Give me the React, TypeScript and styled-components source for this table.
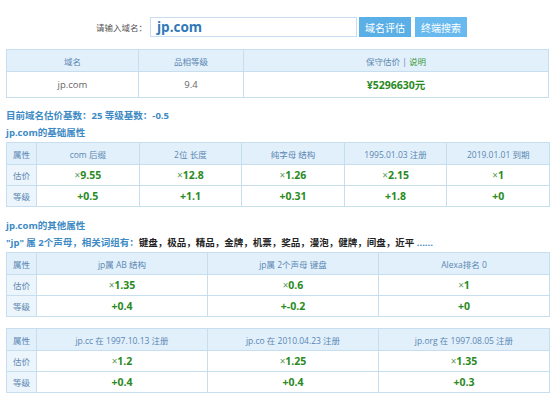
import * as React from "react";
import styled, { createGlobalStyle } from "styled-components";

const GlobalStyle = createGlobalStyle`
  body {
    margin: 0;
    background: #fff;
    font-family: "Open Sans", "Noto Sans CJK SC", sans-serif;
  }
`;

const Page = styled.div`
  width: 544px;
  padding: 17px 0 0 6px;
`;

const SearchRow = styled.div`
  display: flex;
  align-items: center;
  height: 20px;
  padding-left: 90px;
`;

const SearchLabel = styled.span`
  width: 54px;
  font-size: 8.5px;
  color: #555;
`;

const SearchInput = styled.div`
  box-sizing: border-box;
  width: 207px;
  height: 20px;
  border: 1px solid #c8def0;
  padding-left: 6px;
  font-size: 13.5px;
  font-weight: 700;
  line-height: 18px;
  color: #2f78b8;
`;

const Button = styled.button<{ $light?: boolean }>`
  box-sizing: border-box;
  height: 20px;
  width: 52px;
  margin-left: ${(p) => (p.$light ? "4px" : "2px")};
  border: none;
  padding: 0;
  background: ${(p) => (p.$light ? "#68b9ee" : "#5aafe6")};
  color: #fff;
  font-family: "Noto Sans CJK SC", sans-serif;
  font-size: 10px;
`;

const Table = styled.table<{ $top: number; $w?: number }>`
  width: ${(p) => p.$w ?? 544}px;
  margin-top: ${(p) => p.$top}px;
  border-collapse: collapse;
  table-layout: fixed;
`;

const Th = styled.th<{ $w?: number }>`
  width: ${(p) => (p.$w ? `${p.$w}px` : "auto")};
  height: 21px;
  padding: 0;
  border: 1px solid #c7deef;
  background: #e2f0fb;
  color: #5a87b2;
  font-size: 8.5px;
  font-weight: 400;
  text-align: center;
`;

const Td = styled.td<{ $tall?: boolean; $side?: boolean }>`
  height: ${(p) => (p.$tall ? "25px" : "20px")};
  padding: 0;
  border: 1px solid #c7deef;
  background: ${(p) => (p.$side ? "#edf5fc" : "#fff")};
  color: ${(p) => (p.$side ? "#5a87b2" : "#666")};
  font-size: ${(p) => (p.$side ? "8.5px" : "9.5px")};
  text-align: center;
`;

const Value = styled.span`
  color: #2a8a22;
  font-size: 10.5px;
  font-weight: 700;
`;

const Times = styled.span`
  color: #5c9a5c;
  font-weight: 400;
  font-size: 10px;
`;

const Note = styled.span`
  color: #3a9a3a;
`;

const Title = styled.div<{ $top: number }>`
  margin-top: ${(p) => p.$top}px;
  height: 16px;
  line-height: 16px;
  font-size: 9.5px;
  font-weight: 700;
  color: #3d8ac4;
  white-space: nowrap;
`;

const Words = styled.span`
  color: #222;
`;

interface Row {
  label: string;
  values: string[];
}

interface GridProps {
  top: number;
  head: string[];
  rows: Row[];
}

const renderValue = (v: string) =>
  v.startsWith("×") ? (
    <Value>
      <Times>×</Times>
      {v.slice(1)}
    </Value>
  ) : (
    <Value>{v}</Value>
  );

const Grid = ({ top, head, rows }: GridProps) => (
  <Table $top={top}>
    <thead>
      <tr>
        <Th $w={29}>属性</Th>
        {head.map((h) => (
          <Th key={h}>{h}</Th>
        ))}
      </tr>
    </thead>
    <tbody>
      {rows.map((r) => (
        <tr key={r.label}>
          <Td $side>{r.label}</Td>
          {r.values.map((v, i) => (
            <Td key={i}>{renderValue(v)}</Td>
          ))}
        </tr>
      ))}
    </tbody>
  </Table>
);

export default function App() {
  return (
    <Page>
      <GlobalStyle />
      <SearchRow>
        <SearchLabel>请输入域名：</SearchLabel>
        <SearchInput>jp.com</SearchInput>
        <Button>域名评估</Button>
        <Button $light>终端搜索</Button>
      </SearchRow>

      <Table $top={12} $w={543}>
        <thead>
          <tr>
            <Th $w={131}>域名</Th>
            <Th $w={104}>品相等级</Th>
            <Th>
              保守估价 | <Note>说明</Note>
            </Th>
          </tr>
        </thead>
        <tbody>
          <tr>
            <Td $tall>jp.com</Td>
            <Td $tall>9.4</Td>
            <Td $tall>
              <Value>¥5296630元</Value>
            </Td>
          </tr>
        </tbody>
      </Table>

      <Title $top={10}>目前域名估价基数：25 等级基数：-0.5</Title>
      <Title $top={1}>jp.com的基础属性</Title>
      <Grid
        top={1}
        head={["com 后缀", "2位 长度", "纯字母 结构", "1995.01.03 注册", "2019.01.01 到期"]}
        rows={[
          { label: "估价", values: ["×9.55", "×12.8", "×1.26", "×2.15", "×1"] },
          { label: "等级", values: ["+0.5", "+1.1", "+0.31", "+1.8", "+0"] },
        ]}
      />

      <Title $top={11}>jp.com的其他属性</Title>
      <Title $top={1}>
        "jp" 属 2个声母，相关词组有：<Words>键盘，极品，精品，金牌，机票，奖品，漫泡，健牌，间盘，近平</Words> ......
      </Title>
      <Grid
        top={1}
        head={["jp属 AB 结构", "jp属 2个声母 键盘", "Alexa排名 0"]}
        rows={[
          { label: "估价", values: ["×1.35", "×0.6", "×1"] },
          { label: "等级", values: ["+0.4", "+-0.2", "+0"] },
        ]}
      />

      <Grid
        top={11}
        head={["jp.cc 在 1997.10.13 注册", "jp.co 在 2010.04.23 注册", "jp.org 在 1997.08.05 注册"]}
        rows={[
          { label: "估价", values: ["×1.2", "×1.25", "×1.35"] },
          { label: "等级", values: ["+0.4", "+0.4", "+0.3"] },
        ]}
      />
    </Page>
  );
}
